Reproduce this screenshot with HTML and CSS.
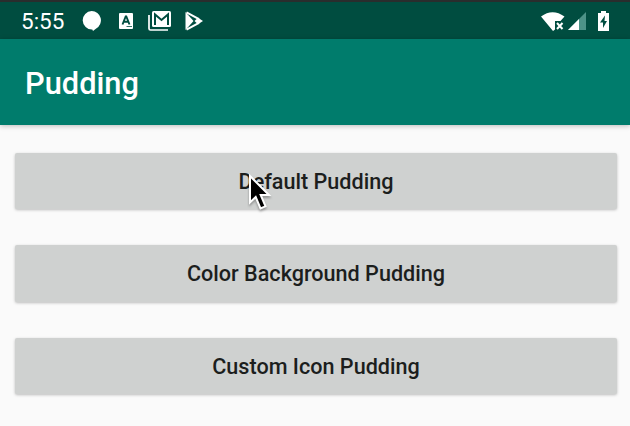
FILE: index.html
```html
<!DOCTYPE html>
<html lang="en">
<head>
<meta charset="utf-8">
<title>Pudding</title>
<link rel="stylesheet" href="styles.css">
</head>
<body>
<div class="status">
  <span class="time">5:55</span>
  <svg class="icon-chat" width="20" height="20" viewBox="0 0 20 20"><path fill="#fff" d="M9.700 0a9.300 9.300 0 0 1 4.500 17.400L11 20l-.7-1.400A9.300 9.300 0 1 1 9.700 0z"/></svg>
  <svg class="icon-card" width="14" height="16" viewBox="0 0 14 16"><rect width="14" height="16" rx="1" fill="#fff"/><path d="M3.500 11.500 6.700 3.500h.6l3.200 8M5 8.700h4" fill="none" stroke="#004d40" stroke-width="1.900"/><path d="M7.500 13.500h5.500" stroke="#004d40" stroke-width=".8"/></svg>
  <svg class="icon-mail" width="24" height="20" viewBox="0 0 24 20"><path d="M1 4v13.500q0 1.500 1.500 1.500H20" fill="none" stroke="#fff" stroke-width="1.700"/><rect x="4" y="0" width="19" height="16" rx="1.500" fill="#fff"/><path d="M7 14V3.500l6.500 5.500 6.500-5.500V14" fill="none" stroke="#004d40" stroke-width="2"/></svg>
  <svg class="icon-play" width="18" height="20" viewBox="0 0 18 20"><path d="M.5 1v18L8.500 10z" fill="#fff"/><path d="M1.500 1.300 14 8.200M1.500 18.700 14 11.800" fill="none" stroke="#fff" stroke-width="2"/><path d="m9.500 10 3.500-3.200 5 3.200-5 3.200z" fill="#fff"/></svg>
  <div class="system">
    <svg class="icon-wifi" width="24" height="19" viewBox="0 0 24 19"><path fill="#fff" d="M0 4.500Q11.500-4 23.500 4.500L19.500 9H14v8.500L12 19z"/><path d="m16 11 5.500 6m0-6L16 17" stroke="#fff" stroke-width="2"/></svg>
    <svg class="icon-signal" width="18" height="18" viewBox="0 0 18 18"><path fill="#4d9388" d="M18 0v18H0z"/><path fill="#fff" d="M11 7v11H0z"/></svg>
    <svg class="icon-battery" width="11" height="20" viewBox="0 0 11 20"><path fill="#fff" d="M3 0h5v2h3v18H0V2h3z"/><path fill="#004d40" d="M7 4.500 2 11.500h3V17l4-7H6.500z"/></svg>
  </div>
</div>
<header class="appbar"><h1>Pudding</h1></header>
<main class="content">
  <button class="action">Default Pudding</button>
  <button class="action">Color Background Pudding</button>
  <button class="action">Custom Icon Pudding</button>
</main>
<svg class="pointer" width="28" height="40" viewBox="0 0 28 40"><path d="M4 3v26.500l5.700-5.500 4.800 11.500 5-2.200L14.700 22H23z" fill="#000" stroke="#fff" stroke-width="2"/></svg>
</body>
</html>
```
FILE: styles.css
```css
* { box-sizing: border-box; }
body {
  margin: 0;
  height: 426px;
  overflow: hidden;
  background: #fafafa;
  font-family: Roboto, sans-serif;
}
.status {
  display: flex;
  align-items: center;
  height: 39px;
  padding: 1px 21px 0 21px;
  border-top: 2px solid #292d2d;
  background: #004d40;
  color: #fff;
}
.status svg { display: block; flex: none; }
.time {
  width: 61px;
  font-size: 22.500px;
  line-height: 26px;
}
.icon-card { margin-left: 17px; }
.icon-mail { margin-left: 15px; }
.icon-play { margin-left: 13px; }
.system {
  display: flex;
  align-items: center;
  margin-left: auto;
}
.icon-signal { margin-left: 3px; }
.icon-battery { margin-left: 12px; }
.appbar {
  display: flex;
  align-items: center;
  height: 86px;
  padding: 4px 25px 0;
  background: #007c6c;
  box-shadow: 0 1px 5px rgba(0, 0, 0, .25);
  color: #fff;
}
.appbar h1 {
  margin: 0;
  font-size: 30.800px;
  font-weight: 500;
  line-height: 40px;
}
.content {
  display: flex;
  flex-direction: column;
  gap: 36px;
  padding: 27.500px 13px 0 15px;
}
.action {
  height: 56.500px;
  padding: 2px 0 0;
  border: 0;
  border-radius: 2px;
  background: #cfd1d0;
  box-shadow: 0 1px 3px rgba(0, 0, 0, .25);
  color: #1c1e1d;
  font: 500 21.600px/28px Roboto, sans-serif;
}
.pointer {
  position: absolute;
  left: 246px;
  top: 173px;
  filter: drop-shadow(0 2px 1px rgba(0, 0, 0, .3));
}
```
